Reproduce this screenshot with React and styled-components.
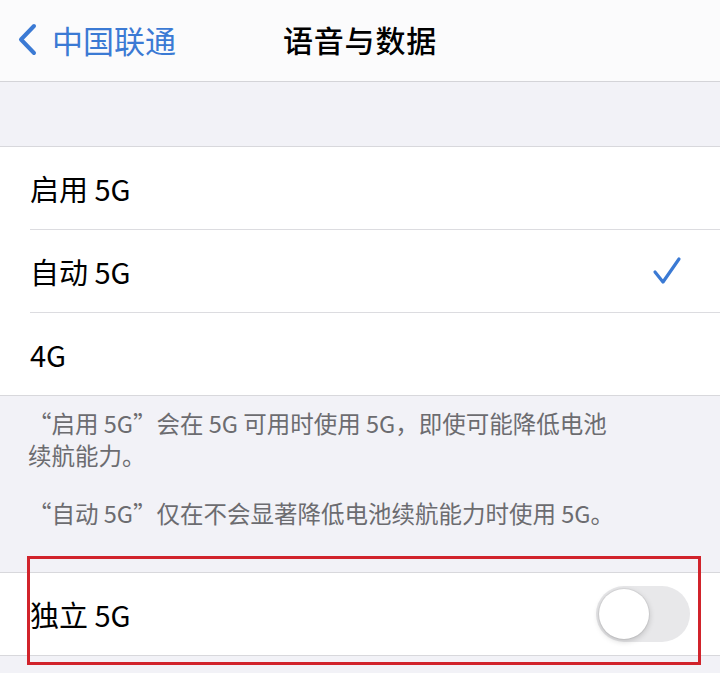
import React, { useState } from 'react';
import styled, { createGlobalStyle } from 'styled-components';

const GlobalStyle = createGlobalStyle`
  html, body {
    margin: 0;
    padding: 0;
    background: #f2f2f7;
  }
  body {
    font-family: "Noto Sans CJK SC", "Noto Sans", sans-serif;
    color: #000;
  }
`;

const Page = styled.div`
  width: 720px;
  min-height: 673px;
  background: #f2f2f7;
  overflow: hidden;
`;

const NavBar = styled.header`
  height: 82px;
  background: #fbfbfc;
  border-bottom: 1px solid #d4d4d8;
  display: grid;
  grid-template-columns: 1fr auto 1fr;
  align-items: center;
  padding: 0 17px;
  box-sizing: border-box;
`;

const BackButton = styled.a`
  display: flex;
  align-items: center;
  gap: 14px;
  color: #3b7ad4;
  font-size: 31px;
  text-decoration: none;
  margin-top: -2px;
  svg {
    width: 21px;
    height: 33px;
  }
`;

const Title = styled.h1`
  margin: -3px 0 0;
  font-size: 30px;
  font-weight: 500;
  letter-spacing: 0.8px;
`;

const Spacer = styled.div`
  height: 64px;
`;

const Group = styled.ul`
  list-style: none;
  margin: 0;
  padding: 0 0 0 30px;
  background: #fff;
  border-top: 1px solid #d8d8dc;
  border-bottom: 1px solid #d8d8dc;
`;

const Row = styled.li`
  height: 82px;
  display: flex;
  align-items: center;
  justify-content: space-between;
  padding-right: 30px;
  font-size: 29px;
  border-bottom: ${p => (p.last ? 'none' : '1px solid #dcdce0')};
`;

const Check = styled.svg`
  width: 30px;
  height: 30px;
  margin-right: 8px;
`;

const Footer = styled.div`
  padding: 11px 30px 43px 28px;
  color: #6c6c70;
  font-size: 23.5px;
  line-height: 32px;
  p {
    margin: 0;
  }
  p + p {
    margin-top: 26px;
  }
`;

const Highlight = styled.section`
  position: relative;
`;

const RedFrame = styled.div`
  position: absolute;
  left: 27px;
  right: 19px;
  top: -16px;
  bottom: -9px;
  border: 3px solid #d1232b;
  pointer-events: none;
`;

const Switch = styled.button`
  width: 94px;
  height: 56px;
  border-radius: 28px;
  border: none;
  padding: 3px;
  background: ${p => (p.on ? '#34c759' : '#e8e8ea')};
  display: flex;
  justify-content: ${p => (p.on ? 'flex-end' : 'flex-start')};
  cursor: pointer;
  &::after {
    content: '';
    width: 50px;
    height: 50px;
    border-radius: 50%;
    background: #fff;
    box-shadow: 0 2px 6px rgba(0, 0, 0, 0.2), 0 0 0 1px rgba(0, 0, 0, 0.05);
  }
`;

const modes = ['启用 5G', '自动 5G', '4G'];

const App = () => {
  const [mode, setMode] = useState('自动 5G');
  const [sa, setSa] = useState(false);

  return (
    <Page>
      <GlobalStyle />
      <NavBar>
        <BackButton>
          <svg viewBox="0 0 21 33" fill="none">
            <path d="M17 3 L4 16.5 L17 30" stroke="#3b7ad4" strokeWidth="4" strokeLinecap="round" strokeLinejoin="round" />
          </svg>
          中国联通
        </BackButton>
        <Title>语音与数据</Title>
        <div />
      </NavBar>
      <Spacer />
      <Group>
        {modes.map((m, i) => (
          <Row key={m} last={i === modes.length - 1} onClick={() => setMode(m)}>
            <span>{m}</span>
            {mode === m && (
              <Check viewBox="0 0 30 30" fill="none">
                <path d="M3 16 L11 26 L27 3" stroke="#3b7ad4" strokeWidth="3.2" strokeLinecap="round" strokeLinejoin="round" />
              </Check>
            )}
          </Row>
        ))}
      </Group>
      <Footer>
        <p>“启用 5G”会在 5G 可用时使用 5G，即使可能降低电池<br />续航能力。</p>
        <p>“自动 5G”仅在不会显著降低电池续航能力时使用 5G。</p>
      </Footer>
      <Highlight>
        <Group>
          <Row last>
            <span>独立 5G</span>
            <Switch on={sa} onClick={() => setSa(!sa)} aria-label="独立 5G" />
          </Row>
        </Group>
        <RedFrame />
      </Highlight>
    </Page>
  );
};

export default App;
